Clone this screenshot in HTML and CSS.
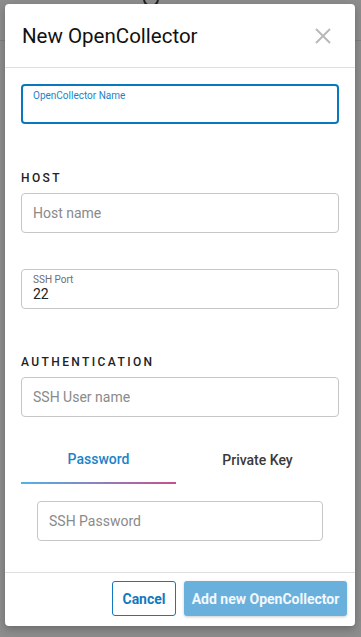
FILE: index.html
```html
<!DOCTYPE html>
<html>
  <head>
    <meta charset="utf-8">
    <title>New OpenCollector</title>
    <link rel="stylesheet" href="styles.css">
  </head>
  <body>
    <div class="page">
      <div class="topbar"><span class="avatar"></span></div>
    </div>

    <div class="modal">
      <div class="modal-head">
        <h2>New OpenCollector</h2>
        <span class="close">
          <svg width="16" height="16" viewBox="0 0 16 16"><path d="M1 1 L15 15 M15 1 L1 15" stroke="#b9b9b9" stroke-width="2"/></svg>
        </span>
      </div>

      <div class="modal-body">
        <div class="field focused">
          <span class="label">OpenCollector Name</span>
          <span class="value"></span>
        </div>

        <div class="section">HOST</div>
        <div class="field">
          <span class="placeholder">Host name</span>
        </div>
        <div class="field port">
          <span class="label">SSH Port</span>
          <span class="value">22</span>
        </div>

        <div class="section auth">AUTHENTICATION</div>
        <div class="field">
          <span class="placeholder">SSH User name</span>
        </div>

        <div class="tabs">
          <div class="tab active">Password</div>
          <div class="tab">Private Key</div>
        </div>
        <div class="tab-panel">
          <div class="field">
            <span class="placeholder">SSH Password</span>
          </div>
        </div>
      </div>

      <div class="modal-foot">
        <button class="btn cancel">Cancel</button>
        <button class="btn primary">Add new OpenCollector</button>
      </div>
    </div>
  </body>
</html>
```

FILE: styles.css
```css
* {
  box-sizing: border-box;
}
body {
  margin: 0;
  background: #8d8d8d;
  font-family: Roboto, "Liberation Sans", sans-serif;
  color: #212121;
  height: 637px;
  overflow: hidden;
}
.page .topbar {
  height: 41px;
  border-bottom: 1px solid #7f7f7f;
  display: flex;
  justify-content: center;
  padding-right: 60px;
}
.avatar {
  width: 16px;
  height: 16px;
  margin-top: -9px;
  border: 2px solid #222;
  border-radius: 50%;
}

.modal {
  position: absolute;
  top: 4px;
  left: 5px;
  width: 350px;
  height: 622px;
  background: #fff;
  border-radius: 4px;
  box-shadow: 0 3px 8px rgba(0,0,0,0.25);
  display: flex;
  flex-direction: column;
}
.modal-head {
  height: 64px;
  border-bottom: 1px solid #dedede;
  display: flex;
  align-items: center;
  justify-content: space-between;
  padding: 0 24px 0 17px;
}
.modal-head h2 {
  margin: 0;
  font-size: 20.5px;
  font-weight: 400;
  color: #111;
  padding-top: 1px;
}
.close {
  display: flex;
  padding-top: 1px;
}

.modal-body {
  flex: 1;
  padding: 16px 16px 0 16px;
}
.field {
  height: 40px;
  border: 1px solid #c6c6c6;
  border-radius: 4px;
  padding: 0 11px;
  display: flex;
  flex-direction: column;
  justify-content: center;
}
.field.focused {
  border: 2px solid #0a78bf;
  justify-content: flex-start;
  padding: 4px 10px;
}
.field .label {
  font-size: 10px;
  line-height: 12px;
  color: #6e6e6e;
}
.field.focused .label {
  color: #1a84c9;
}
.field .value {
  font-size: 14px;
  line-height: 16px;
  color: #222;
}
.field .placeholder {
  font-size: 14px;
  color: #8a8a8a;
}
.field.port {
  margin-top: 36px;
  justify-content: flex-start;
  padding-top: 4px;
}

.section {
  margin: 44px 0 5px 0;
  font-size: 12px;
  line-height: 20px;
  font-weight: 500;
  letter-spacing: 2.4px;
  color: #222;
}
.section.auth {
  margin-top: 43px;
}

.tabs {
  display: flex;
  margin-top: 16px;
}
.tab {
  flex: 1;
  height: 51px;
  display: flex;
  align-items: center;
  justify-content: center;
  font-size: 14px;
  font-weight: 500;
  color: #3a3a3a;
  padding-top: 3px;
}
.tab.active {
  flex: none;
  width: 155px;
  color: #1a84c9;
  border-bottom: 2px solid transparent;
  border-image: linear-gradient(to right, #4fb3ec, #c84f8a) 1;
}
.tab-panel {
  padding: 17px 16px 0 16px;
}

.modal-foot {
  height: 54px;
  border-top: 1px solid #dedede;
  display: flex;
  justify-content: flex-end;
  align-items: flex-start;
  gap: 8px;
  padding: 8px 8px 0 0;
}
.btn {
  height: 35px;
  font-family: Roboto, "Liberation Sans", sans-serif;
  font-size: 14px;
  font-weight: 700;
  border-radius: 3px;
  padding: 0 4px;
  white-space: nowrap;
}
.cancel {
  width: 64px;
  background: #fff;
  color: #1279c0;
  border: 1px solid #1279c0;
}
.primary {
  width: 163px;
  background: #69b1dc;
  color: #f2f8fc;
  border: none;
  box-shadow: 0 1px 3px rgba(0,0,0,0.2);
}
```
